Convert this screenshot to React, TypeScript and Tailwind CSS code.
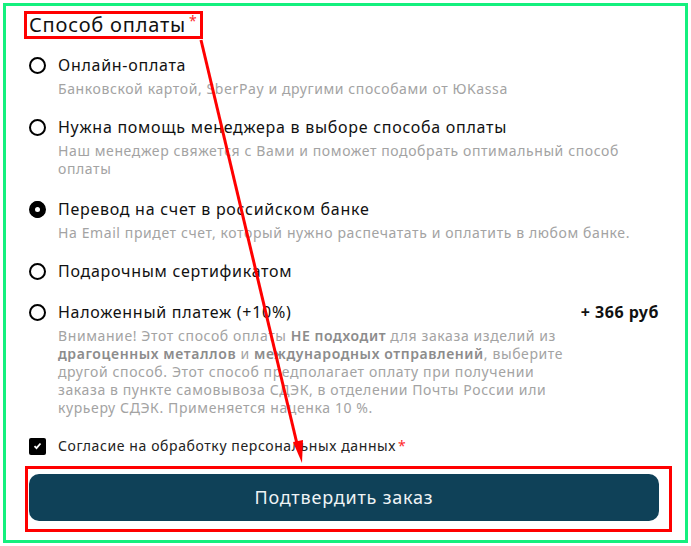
import React from "react";

const Radio = ({ checked }: { checked?: boolean }) => (
  <div className="mt-[3px] flex h-[17px] w-[17px] shrink-0 items-center justify-center rounded-full border-[2px] border-black bg-white">
    {checked ? (
      <div className="flex h-[17px] w-[17px] items-center justify-center rounded-full bg-black">
        <div className="h-[5px] w-[5px] rounded-full bg-white" />
      </div>
    ) : null}
  </div>
);

const Option = ({
  checked,
  label,
  right,
  children,
  className,
}: {
  checked?: boolean;
  label: string;
  right?: string;
  children?: React.ReactNode;
  className?: string;
}) => (
  <div className={"flex items-start gap-[12px] " + (className ?? "")}>
    <Radio checked={checked} />
    <div className="flex-1">
      <div className="flex items-start justify-between">
        <div className="text-[16px] leading-[22px] tracking-[0.72px] text-[#111]">{label}</div>
        {right ? (
          <div className="text-[16px] leading-[22px] font-bold tracking-[0.5px] text-[#111]">{right}</div>
        ) : null}
      </div>
      {children ? (
        <div className="mt-[4px] whitespace-nowrap text-[14px] leading-[18px] tracking-[0.6px] text-[#a3a3a3]">
          {children}
        </div>
      ) : null}
    </div>
  </div>
);

const B = ({ children }: { children: React.ReactNode }) => (
  <span className="font-semibold text-[#8c8c8c]">{children}</span>
);

export default function App() {
  return (
    <div
      className="relative h-[546px] w-[691px] bg-white"
      style={{ fontFamily: '"Noto Sans", "Open Sans", sans-serif' }}
    >
      <div className="absolute left-[3px] top-[3px] h-[540px] w-[685px] border-[3px] border-[#14f07e]" />
      <div className="flex flex-col pl-[29px] pr-[32px] pt-[11px]">
        <div className="-ml-[5px] self-start border-[3px] border-[#ff0000] px-[2px]">
          <div className="text-[20px] leading-[22px] tracking-[0.8px] text-[#111]">
            Способ оплаты
            <span className="ml-[3px] align-top text-[14px] leading-[14px] text-[#ff2a2a]">*</span>
          </div>
        </div>
        <div className="mt-[15px] flex flex-col gap-[18px]">
          <Option label="Онлайн-оплата">Банковской картой, SberPay и другими способами от ЮKassa</Option>
          <Option label="Нужна помощь менеджера в выборе способа оплаты">
            Наш менеджер свяжется с Вами и поможет подобрать оптимальный способ
            <br />
            оплаты
          </Option>
          <Option checked label="Перевод на счет в российском банке" className="mt-[2px]">
            На Email придет счет, который нужно распечатать и оплатить в любом банке.
          </Option>
          <Option label="Подарочным сертификатом" />
          <Option label="Наложенный платеж (+10%)" right="+ 366 руб" className="mt-[1px]">
            Внимание! Этот способ оплаты <B>НЕ подходит</B> для заказа изделий из
            <br />
            <B>драгоценных металлов</B> и <B>международных отправлений</B>, выберите
            <br />
            другой способ. Этот способ предполагает оплату при получении
            <br />
            заказа в пункте самовывоза СДЭК, в отделении Почты России или
            <br />
            курьеру СДЭК. Применяется наценка 10 %.
          </Option>
        </div>
        <div className="mt-[20px] flex items-center gap-[12px]">
          <div className="flex h-[17px] w-[17px] items-center justify-center rounded-[2px] bg-black">
            <svg width="9" height="8" viewBox="0 0 9 8">
              <path d="M1.5 4.2 L3.5 6.2 L7.5 1.5" stroke="white" strokeWidth="1.8" fill="none" />
            </svg>
          </div>
          <div className="text-[14px] leading-[18px] tracking-[0.6px] text-[#222]">
            Согласие на обработку персональных данных
            <span className="ml-[2px] text-[#ff2a2a]">*</span>
          </div>
        </div>
        <button className="mt-[19px] flex h-[47px] w-[630px] items-center justify-center rounded-[10px] bg-[#0f4158] text-[18px] tracking-[0.8px] text-[#eef3f5]">
          Подтвердить заказ
        </button>
      </div>
      <div className="absolute left-[25px] top-[466px] h-[66px] w-[647px] border-[3px] border-[#ff0000]" />
      <svg className="absolute left-0 top-0" width="691" height="546" viewBox="0 0 691 546">
        <line x1="201" y1="40" x2="298" y2="448" stroke="#ff0000" strokeWidth="3" />
        <polygon points="302,463 293,442 303,440" fill="#ff0000" />
      </svg>
    </div>
  );
}
